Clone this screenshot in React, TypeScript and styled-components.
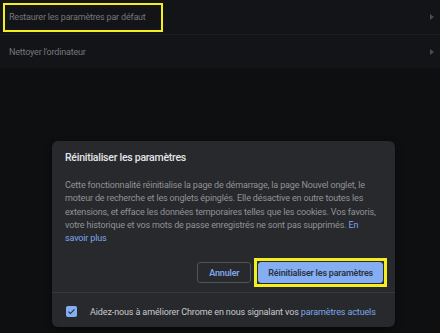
import styled, { createGlobalStyle } from "styled-components";

const GlobalStyle = createGlobalStyle`
  html, body {
    margin: 0;
    padding: 0;
    background: #0e0f11;
  }
  * {
    box-sizing: border-box;
  }
`;

const PageStyled = styled.div`
  position: relative;
  width: 440px;
  height: 333px;
  overflow: hidden;
  background: #0e0f11;
  font-family: Roboto, "Liberation Sans", sans-serif;
`;

const SettingsCardStyled = styled.div`
  background: #131417;
  display: flex;
  flex-direction: column;
`;

const RowStyled = styled.div<{ divider?: boolean }>`
  height: ${(props) => (props.divider ? "35px" : "33px")};
  display: flex;
  align-items: center;
  justify-content: space-between;
  padding: 0 6px 0 3px;
  border-bottom: ${(props) => (props.divider ? "1px solid #1c1d20" : "none")};
`;

const RowLabelStyled = styled.span<{ highlighted?: boolean }>`
  display: flex;
  align-items: center;
  height: 29px;
  padding: 0 15px 0 4px;
  border: 2px solid ${(props) => (props.highlighted ? "#f5ee1f" : "transparent")};
  color: #74777b;
  font-size: 9px;
  letter-spacing: -0.2px;
`;

const ArrowStyled = styled.span`
  width: 0;
  height: 0;
  border-top: 3px solid transparent;
  border-bottom: 3px solid transparent;
  border-left: 4px solid #4a4c50;
`;

const BackdropStyled = styled.div`
  position: absolute;
  inset: 0;
  display: flex;
  align-items: flex-start;
  padding: 141px 0 0 52px;
`;

const DialogStyled = styled.div`
  width: 343px;
  height: 186px;
  background: #28292c;
  border-radius: 6px;
  box-shadow: 0 2px 6px rgba(0, 0, 0, 0.6);
  display: flex;
  flex-direction: column;
`;

const DialogBodyStyled = styled.div`
  padding: 10px 8px 0 13px;
  flex: 1;
  display: flex;
  flex-direction: column;
`;

const DialogTitleStyled = styled.h2`
  margin: 0 0 14px;
  font-size: 10.5px;
  line-height: 14px;
  font-weight: 500;
  letter-spacing: -0.25px;
  color: #e3e5e8;
`;

const DialogTextStyled = styled.p`
  margin: 0 4px 0 0;
  font-size: 9px;
  line-height: 13.3px;
  letter-spacing: -0.15px;
  color: #8f9398;
`;

const LinkStyled = styled.a`
  color: #7ea7eb;
  text-decoration: none;
`;

const ButtonRowStyled = styled.div`
  display: flex;
  justify-content: flex-end;
  align-items: center;
  gap: 3px;
  margin-top: auto;
  padding-bottom: 5px;
`;

const ButtonStyled = styled.button<{ primary?: boolean }>`
  height: 21px;
  padding: 0 ${(props) => (props.primary ? "9px" : "11px")};
  border-radius: 3px;
  font-family: inherit;
  font-size: 9px;
  font-weight: 600;
  letter-spacing: -0.2px;
  border: 1px solid ${(props) => (props.primary ? "#85aef2" : "#505357")};
  background: ${(props) => (props.primary ? "#85aef2" : "transparent")};
  color: ${(props) => (props.primary ? "#2a3342" : "#7ea7eb")};
`;

const HighlightStyled = styled.span`
  display: flex;
  padding: 1px;
  border: 3px solid #f5ee1f;
  background: #2a2b2e;
`;

const FooterStyled = styled.div`
  height: 35px;
  border-top: 1px solid #36373a;
  display: flex;
  align-items: center;
  gap: 13px;
  padding: 3px 0 0 14px;
  font-size: 9px;
  letter-spacing: -0.12px;
  color: #c9cbcf;
`;

const CheckboxStyled = styled.span`
  width: 11px;
  height: 11px;
  border-radius: 2px;
  background: #85aef2;
  display: flex;
  align-items: center;
  justify-content: center;
`;

const App = () => {
  return (
    <PageStyled>
      <GlobalStyle />
      <SettingsCardStyled>
        <RowStyled divider>
          <RowLabelStyled highlighted>Restaurer les paramètres par défaut</RowLabelStyled>
          <ArrowStyled />
        </RowStyled>
        <RowStyled>
          <RowLabelStyled>Nettoyer l'ordinateur</RowLabelStyled>
          <ArrowStyled />
        </RowStyled>
      </SettingsCardStyled>
      <BackdropStyled>
        <DialogStyled>
          <DialogBodyStyled>
            <DialogTitleStyled>Réinitialiser les paramètres</DialogTitleStyled>
            <DialogTextStyled>
              Cette fonctionnalité réinitialise la page de démarrage, la page Nouvel onglet, le
              moteur de recherche et les onglets épinglés. Elle désactive en outre toutes les
              extensions, et efface les données temporaires telles que les cookies. Vos favoris,
              votre historique et vos mots de passe enregistrés ne sont pas supprimés.{" "}
              <LinkStyled>En savoir plus</LinkStyled>
            </DialogTextStyled>
            <ButtonRowStyled>
              <ButtonStyled>Annuler</ButtonStyled>
              <HighlightStyled>
                <ButtonStyled primary>Réinitialiser les paramètres</ButtonStyled>
              </HighlightStyled>
            </ButtonRowStyled>
          </DialogBodyStyled>
          <FooterStyled>
            <CheckboxStyled>
              <svg width="9" height="9" viewBox="0 0 24 24">
                <path d="M4 12.5l5 5L20 6.5" fill="none" stroke="#1f2a3a" strokeWidth="3" />
              </svg>
            </CheckboxStyled>
            <span>
              Aidez-nous à améliorer Chrome en nous signalant vos{" "}
              <LinkStyled>paramètres actuels</LinkStyled>
            </span>
          </FooterStyled>
        </DialogStyled>
      </BackdropStyled>
    </PageStyled>
  );
};

export default App;
